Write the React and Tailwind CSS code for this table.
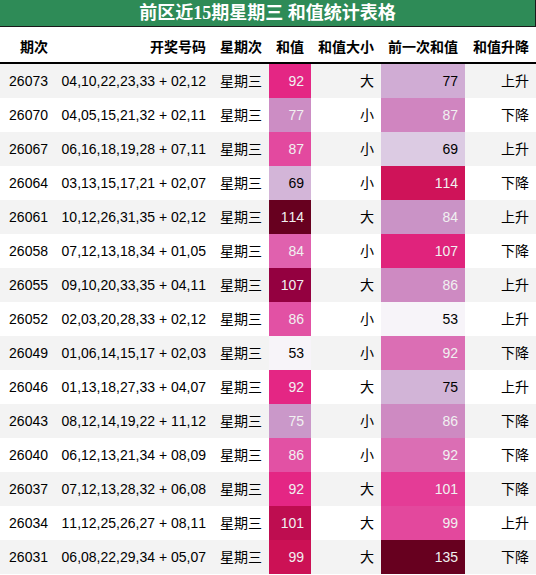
import React from 'react';

const rows = [
  ['26073', '04,10,22,23,33 + 02,12', 92, '大', 77, '上升'],
  ['26070', '04,05,15,21,32 + 02,11', 77, '小', 87, '下降'],
  ['26067', '06,16,18,19,28 + 07,11', 87, '小', 69, '上升'],
  ['26064', '03,13,15,17,21 + 02,07', 69, '小', 114, '下降'],
  ['26061', '10,12,26,31,35 + 02,12', 114, '大', 84, '上升'],
  ['26058', '07,12,13,18,34 + 01,05', 84, '小', 107, '下降'],
  ['26055', '09,10,20,33,35 + 04,11', 107, '大', 86, '上升'],
  ['26052', '02,03,20,28,33 + 02,12', 86, '小', 53, '上升'],
  ['26049', '01,06,14,15,17 + 02,03', 53, '小', 92, '下降'],
  ['26046', '01,13,18,27,33 + 04,07', 92, '大', 75, '上升'],
  ['26043', '08,12,14,19,22 + 11,12', 75, '小', 86, '下降'],
  ['26040', '06,12,13,21,34 + 08,09', 86, '小', 92, '下降'],
  ['26037', '07,12,13,28,32 + 06,08', 92, '大', 101, '下降'],
  ['26034', '11,12,25,26,27 + 08,11', 101, '大', 99, '上升'],
  ['26031', '06,08,22,29,34 + 05,07', 99, '大', 135, '下降'],
];

// PuRd colormap stops
const stops = ['#f7f4f9', '#e7e1ef', '#d4b9da', '#c994c7', '#df65b0', '#e7298a', '#ce1256', '#980043', '#67001f'].map((h) => [
  parseInt(h.slice(1, 3), 16),
  parseInt(h.slice(3, 5), 16),
  parseInt(h.slice(5, 7), 16),
]);

function gradient(v, min, max) {
  const t = (v - min) / (max - min);
  const p = t * (stops.length - 1);
  const i = Math.min(Math.floor(p), stops.length - 2);
  const f = p - i;
  const rgb = stops[i].map((c, k) => Math.round(c + (stops[i + 1][k] - c) * f));
  const lin = rgb.map((c) => {
    const s = c / 255;
    return s <= 0.03928 ? s / 12.92 : Math.pow((s + 0.055) / 1.055, 2.4);
  });
  const lum = 0.2126 * lin[0] + 0.7152 * lin[1] + 0.0722 * lin[2];
  return {
    backgroundColor: `rgb(${rgb.join(',')})`,
    color: lum < 0.408 ? '#f1f1f1' : '#000000',
  };
}

const sums = rows.map((r) => r[2]);
const prevs = rows.map((r) => r[4]);
const sMin = Math.min(...sums), sMax = Math.max(...sums);
const pMin = Math.min(...prevs), pMax = Math.max(...prevs);

const cols = 'grid grid-cols-[55px_158px_56px_42px_70px_84px_71px]';
const headers = ['期次', '开奖号码', '星期次', '和值', '和值大小', '前一次和值', '和值升降'];

export default function App() {
  return (
    <div
      className="w-[536px] h-[575px] overflow-hidden bg-white text-black text-[14px] [font-kerning:none]"
      style={{ fontFamily: '"Liberation Sans", "Noto Sans CJK SC", sans-serif' }}
    >
      <div
        className="h-[27px] bg-[#2e8b57] border-b border-r border-[#1a1a1a] flex items-center justify-center text-white font-bold text-[18px] leading-none"
        style={{ fontFamily: '"Liberation Serif", "Noto Sans CJK SC", serif' }}
      >
        前区近15期星期三 和值统计表格
      </div>
      <div className={`${cols} h-[37px] border-b-2 border-black font-bold`}>
        {headers.map((h) => (
          <div key={h} className="flex items-center justify-end pr-[7px] pt-[5px]">
            {h}
          </div>
        ))}
      </div>
      {rows.map((r, idx) => (
        <div key={r[0]} className={`${cols} h-[34px] ${idx % 2 === 0 ? 'bg-[#f3f3f3]' : 'bg-white'}`}>
          <div className="flex items-center justify-end pr-[7px]">{r[0]}</div>
          <div className="flex items-center justify-end pr-[7px]">{r[1]}</div>
          <div className="flex items-center justify-end pr-[7px]">星期三</div>
          <div className="flex items-center justify-end pr-[7px]" style={gradient(r[2], sMin, sMax)}>
            {r[2]}
          </div>
          <div className="flex items-center justify-end pr-[7px]">{r[3]}</div>
          <div className="flex items-center justify-end pr-[7px]" style={gradient(r[4], pMin, pMax)}>
            {r[4]}
          </div>
          <div className="flex items-center justify-end pr-[7px]">{r[5]}</div>
        </div>
      ))}
    </div>
  );
}
